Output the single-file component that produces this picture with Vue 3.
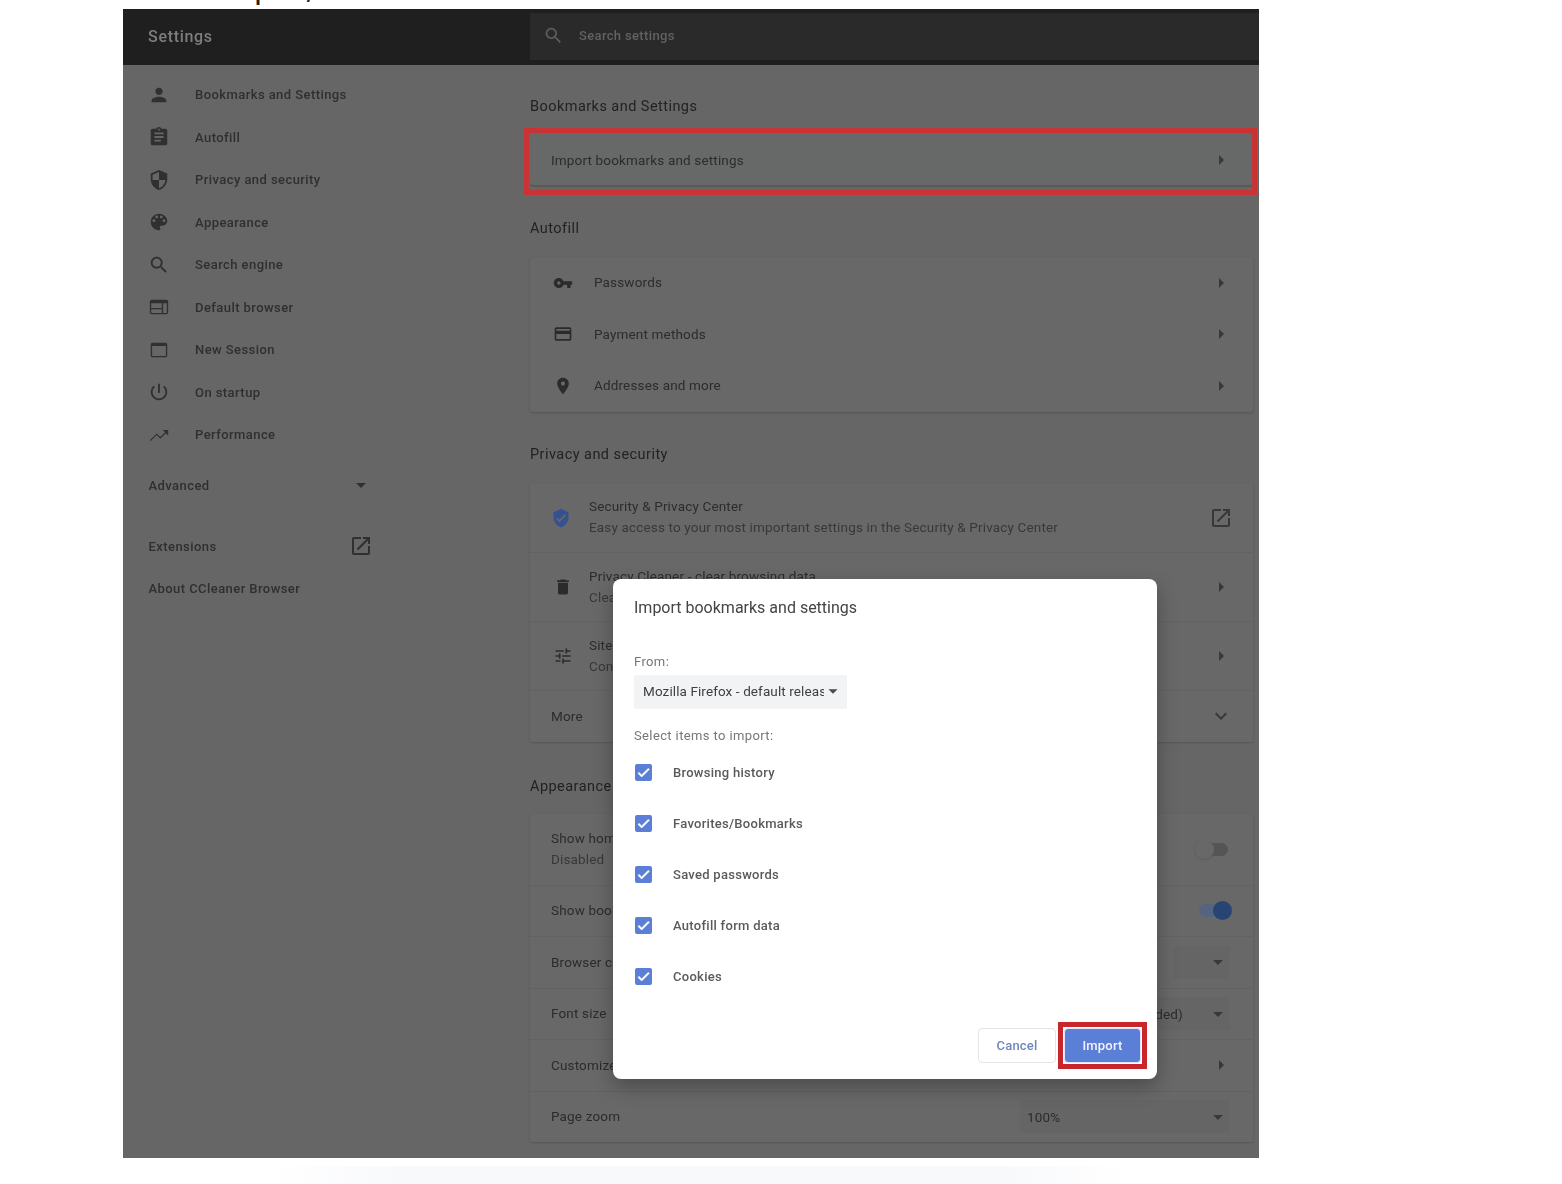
<script setup>
const icons = {
  person: "M12 12c2.21 0 4-1.79 4-4s-1.79-4-4-4-4 1.79-4 4 1.79 4 4 4zm0 2c-2.67 0-8 1.34-8 4v2h16v-2c0-2.66-5.33-4-8-4z",
  assignment: "M19 3h-4.18C14.4 1.84 13.3 1 12 1c-1.3 0-2.4.84-2.82 2H5c-1.1 0-2 .9-2 2v14c0 1.1.9 2 2 2h14c1.1 0 2-.9 2-2V5c0-1.1-.9-2-2-2zm-7 0c.55 0 1 .45 1 1s-.45 1-1 1-1-.45-1-1 .45-1 1-1zm2 14H7v-2h7v2zm3-4H7v-2h10v2zm0-4H7V7h10v2z",
  security: "M12 1L3 5v6c0 5.55 3.84 10.74 9 12 5.16-1.26 9-6.45 9-12V5l-9-4zm0 10.99h7c-.53 4.12-3.28 7.79-7 8.94V12H5V6.3l7-3.11v8.8z",
  palette: "M12 3c-4.97 0-9 4.03-9 9s4.03 9 9 9c.83 0 1.5-.67 1.5-1.5 0-.39-.15-.74-.39-1.01-.23-.26-.38-.61-.38-.99 0-.83.67-1.5 1.5-1.5H16c2.76 0 5-2.24 5-5 0-4.42-4.03-8-9-8zm-5.5 9c-.83 0-1.5-.67-1.5-1.5S5.67 9 6.5 9 8 9.67 8 10.5 7.33 12 6.5 12zm3-4C8.67 8 8 7.33 8 6.5S8.67 5 9.5 5s1.5.67 1.5 1.5S10.33 8 9.5 8zm5 0c-.83 0-1.5-.67-1.5-1.5S13.67 5 14.5 5s1.5.67 1.5 1.5S15.33 8 14.5 8zm3 4c-.83 0-1.5-.67-1.5-1.5S16.67 9 17.5 9s1.5.67 1.5 1.5-.67 1.5-1.5 1.5z",
  search: "M15.5 14h-.79l-.28-.27C15.41 12.59 16 11.11 16 9.5 16 5.91 13.09 3 9.5 3S3 5.91 3 9.5 5.91 16 9.5 16c1.61 0 3.09-.59 4.23-1.57l.27.28v.79l5 4.99L20.49 19l-4.99-5zm-6 0C7.01 14 5 11.99 5 9.5S7.01 5 9.5 5 14 7.01 14 9.5 11.99 14 9.5 14z",
  web: "M20 4H4a2 2 0 0 0-2 2v12a2 2 0 0 0 2 2h16a2 2 0 0 0 2-2V6a2 2 0 0 0-2-2zm-5 14.5H3.5v-4H15v4zm0-5.5H3.5V8H15v5zm5.5 5.5h-4V8h4v10.5z",
  asset: "M19 4H5c-1.11 0-2 .9-2 2v12c0 1.1.89 2 2 2h14c1.1 0 2-.9 2-2V6c0-1.1-.89-2-2-2zm.5 14.5h-15V7.5h15v11z",
  power: "M13 3h-2v10h2V3zm4.83 2.17l-1.42 1.42C17.99 7.86 19 9.81 19 12c0 3.87-3.13 7-7 7s-7-3.13-7-7c0-2.19 1.01-4.14 2.58-5.42L6.17 5.17C4.23 6.82 3 9.26 3 12c0 4.97 4.03 9 9 9s9-4.03 9-9c0-2.74-1.23-5.18-3.17-6.83z",
  trending: "M16 6.5l2.6 2.6-5.2 5.2-4-4L2 17.6l.9.9 6.5-6.5 4 4 6-6 2.6 2.5V6.5z",
  open: "M19 19H5V5h7V3H5c-1.11 0-2 .9-2 2v14c0 1.1.89 2 2 2h14c1.1 0 2-.9 2-2v-7h-2v7zM14 3v2h3.59l-9.83 9.83 1.41 1.41L19 6.41V10h2V3h-7z",
  key: "M12.65 10C11.83 7.67 9.61 6 7 6c-3.31 0-6 2.69-6 6s2.69 6 6 6c2.61 0 4.83-1.67 5.65-4H17v4h4v-4h2v-4H12.65zM7 14c-1.1 0-2-.9-2-2s.9-2 2-2 2 .9 2 2-.9 2-2 2z",
  card: "M20 4H4c-1.11 0-1.99.89-1.99 2L2 18c0 1.11.89 2 2 2h16c1.11 0 2-.89 2-2V6c0-1.11-.89-2-2-2zm0 14H4v-6h16v6zm0-10H4V6h16v2z",
  place: "M12 2C8.13 2 5 5.13 5 9c0 5.25 7 13 7 13s7-7.75 7-13c0-3.87-3.13-7-7-7zm0 9.5c-1.38 0-2.5-1.12-2.5-2.5s1.12-2.5 2.5-2.5 2.5 1.12 2.5 2.5-1.12 2.5-2.5 2.5z",
  trash: "M6 19c0 1.1.9 2 2 2h8c1.1 0 2-.9 2-2V7H6v12zM19 4h-3.5l-1-1h-5l-1 1H5v2h14V4z",
  tune: "M3 17v2h6v-2H3zM3 5v2h10V5H3zm10 16v-2h8v-2h-8v-2h-2v6h2zM7 9v2H3v2h4v2h2V9H7zm14 4v-2H11v2h10zm-6-4h2V7h4V5h-4V3h-2v6z",
  verified: "M12 1L3 5v6c0 5.55 3.84 10.74 9 12 5.16-1.26 9-6.45 9-12V5l-9-4zm-2 16l-4-4 1.41-1.41L10 14.17l6.59-6.59L18 9l-8 8z",
  expand: "M16.59 8.59L12 13.17 7.41 8.59 6 10l6 6 6-6z",
  dropdown: "M7 10l5 5 5-5z",
  right: "M10 17l5-5-5-5v10z",
  check: "M9 16.17L4.83 12l-1.41 1.41L9 19 21 7l-1.41-1.41z",
};

const navItems = [
  { label: "Bookmarks and Settings", icon: "person" },
  { label: "Autofill", icon: "assignment" },
  { label: "Privacy and security", icon: "security" },
  { label: "Appearance", icon: "palette" },
  { label: "Search engine", icon: "search" },
  { label: "Default browser", icon: "web" },
  { label: "New Session", icon: "asset" },
  { label: "On startup", icon: "power" },
  { label: "Performance", icon: "trending" },
];

const sections = [
  {
    title: "Bookmarks and Settings",
    marked: true,
    rows: [{ label: "Import bookmarks and settings", trail: "right" }],
  },
  {
    title: "Autofill",
    rows: [
      { label: "Passwords", icon: "key", trail: "right" },
      { label: "Payment methods", icon: "card", trail: "right" },
      { label: "Addresses and more", icon: "place", trail: "right" },
    ],
  },
  {
    title: "Privacy and security",
    lined: true,
    rows: [
      {
        label: "Security & Privacy Center",
        sub: "Easy access to your most important settings in the Security & Privacy Center",
        icon: "verified",
        blue: true,
        trail: "open",
      },
      {
        label: "Privacy Cleaner - clear browsing data",
        sub: "Clear history, cookies, cache and more",
        icon: "trash",
        trail: "right",
      },
      {
        label: "Site Settings",
        sub: "Control what information websites can use",
        icon: "tune",
        trail: "right",
      },
      { label: "More", trail: "expand" },
    ],
  },
  {
    title: "Appearance",
    lined: true,
    rows: [
      { label: "Show home button", sub: "Disabled", toggle: "off" },
      { label: "Show bookmarks bar", toggle: "on" },
      { label: "Browser color theme", select: "", short: true },
      { label: "Font size", select: "Medium (Recommended)" },
      { label: "Customize fonts", trail: "right" },
      { label: "Page zoom", select: "100%" },
    ],
  },
];

const importItems = ["Browsing history", "Favorites/Bookmarks", "Saved passwords", "Autofill form data", "Cookies"];
</script>

<template>
  <div class="page">
    <div class="cut-line"><div class="cut-text">Click Import,</div></div>

    <div class="window">
      <header class="topbar">
        <div class="brand">Settings</div>
        <div class="search">
          <svg class="search-icon" viewBox="0 0 24 24"><path :d="icons.search" /></svg>
          <span>Search settings</span>
        </div>
      </header>

      <div class="content">
        <aside class="sidebar">
          <div v-for="item in navItems" :key="item.label" class="nav-item">
            <svg class="nav-icon" viewBox="0 0 24 24"><path :d="icons[item.icon]" /></svg>
            <span>{{ item.label }}</span>
          </div>
          <div class="nav-plain advanced">
            <span>Advanced</span>
            <svg class="nav-icon" viewBox="0 0 24 24"><path :d="icons.dropdown" /></svg>
          </div>
          <div class="nav-plain extensions">
            <span>Extensions</span>
            <svg class="nav-icon" viewBox="0 0 24 24"><path :d="icons.open" /></svg>
          </div>
          <div class="nav-plain">
            <span>About CCleaner Browser</span>
          </div>
        </aside>

        <main class="main">
          <section v-for="section in sections" :key="section.title" class="section">
            <h2 class="section-title">{{ section.title }}</h2>
            <div class="card" :class="{ lined: section.lined, marked: section.marked }">
              <div v-if="section.marked" class="red-box"></div>
              <div
                v-for="row in section.rows"
                :key="row.label"
                class="row"
                :class="{ tall: row.sub, 'has-sub-icon': row.sub && row.icon }"
              >
                <svg v-if="row.icon" class="row-icon" :class="{ blue: row.blue }" viewBox="0 0 24 24">
                  <path :d="icons[row.icon]" />
                </svg>
                <div class="row-text">
                  <div>{{ row.label }}</div>
                  <div v-if="row.sub" class="row-sub">{{ row.sub }}</div>
                </div>
                <svg v-if="row.trail" class="row-trail" viewBox="0 0 24 24"><path :d="icons[row.trail]" /></svg>
                <div v-if="row.toggle" class="toggle" :class="row.toggle"><span class="knob"></span></div>
                <div v-if="row.select !== undefined" class="select" :class="{ short: row.short }">
                  <span>{{ row.select }}</span>
                  <svg class="row-trail" viewBox="0 0 24 24"><path :d="icons.dropdown" /></svg>
                </div>
              </div>
            </div>
          </section>
        </main>
      </div>

      <div class="dialog">
        <div class="dialog-title">Import bookmarks and settings</div>
        <div class="dialog-label from">From:</div>
        <div class="browser-select">
          <span class="browser-name">Mozilla Firefox - default release</span>
          <svg class="browser-arrow" viewBox="0 0 24 24"><path :d="icons.dropdown" /></svg>
        </div>
        <div class="dialog-label items">Select items to import:</div>
        <div class="checks">
          <div v-for="item in importItems" :key="item" class="check-row">
            <span class="checkbox">
              <svg viewBox="0 0 24 24"><path :d="icons.check" /></svg>
            </span>
            <span>{{ item }}</span>
          </div>
        </div>
        <div class="actions">
          <button class="btn cancel">Cancel</button>
          <button class="btn import">Import</button>
          <div class="red-box-import"></div>
        </div>
      </div>
    </div>

    <div class="bottom-glow"></div>
  </div>
</template>

<style>
html,
body {
  margin: 0;
  background: #fff;
}
</style>

<style scoped>
.page {
  width: 1562px;
  height: 1184px;
  overflow: hidden;
  background: #fff;
  font-family: Roboto, "Liberation Sans", sans-serif;
}

.cut-line {
  height: 9px;
  overflow: hidden;
  padding-left: 160px;
  font-family: "Open Sans", sans-serif;
  font-size: 25px;
  font-weight: 600;
  line-height: 9px;
  color: #222;
  white-space: nowrap;
}

.cut-text {
  margin-top: -15px;
}

.window {
  position: relative;
  width: 1136px;
  height: 1149px;
  margin-left: 123px;
  background: #666;
  overflow: hidden;
  filter: blur(0.45px);
}

.topbar {
  display: flex;
  align-items: center;
  height: 56px;
  background: #1f1f1f;
}

.brand {
  width: 407px;
  box-sizing: border-box;
  padding: 0 0 2px 25px;
  font-size: 16px;
  font-weight: 500;
  letter-spacing: 0.7px;
  color: #7e7e7e;
}

.search {
  flex: 1;
  display: flex;
  align-items: center;
  height: 47px;
  margin-bottom: 1px;
  padding: 0 0 2px 13px;
  box-sizing: border-box;
  background: #2a2a2a;
  font-size: 13px;
  font-weight: 500;
  letter-spacing: 0.35px;
  color: #626262;
}

.search-icon {
  width: 21px;
  height: 21px;
  margin-right: 15px;
  fill: #5c5c5c;
}

.content {
  display: flex;
}

.sidebar {
  width: 407px;
  box-sizing: border-box;
  padding: 8.5px 0 0 25.5px;
  font-size: 13px;
  font-weight: 500;
  letter-spacing: 0.43px;
  color: #2f2f2f;
}

.nav-item {
  display: flex;
  align-items: center;
  height: 42.5px;
}

.nav-icon {
  flex: none;
  width: 24px;
  height: 24px;
  fill: #303030;
}

.nav-item .nav-icon {
  width: 22px;
  height: 22px;
  margin: 0 25.5px 0 -1px;
}

.nav-plain {
  display: flex;
  align-items: center;
  justify-content: space-between;
  width: 224.5px;
  height: 42.5px;
}

.advanced {
  margin-top: 8px;
}

.extensions {
  margin-top: 18.5px;
}

.main {
  flex: 1;
  padding-top: 28px;
  color: #2c2c2c;
}

.section {
  width: 723px;
  margin-top: 31px;
}

.section:first-child {
  margin-top: 0;
}

.section:nth-child(2) {
  margin-top: 28px;
}

.section:nth-child(3) {
  margin-top: 29.5px;
}

.section-title {
  margin: 0 0 14px;
  font-size: 14.5px;
  font-weight: 400;
  line-height: 28px;
  letter-spacing: 0.45px;
  color: #222;
}

.section:first-child .section-title {
  margin-bottom: 12px;
}

.section:nth-child(4) .section-title {
  margin-bottom: 13px;
}

.card {
  position: relative;
  background: #686868;
  border-radius: 3px;
  box-shadow: 0 1px 2px #555;
  font-size: 13.5px;
  letter-spacing: 0.16px;
}

.card.marked {
  background: #666967;
  box-shadow: inset 0 -2px 0 #585a58;
}

.red-box {
  position: absolute;
  inset: -5px -4px -8px -6px;
  border: 5px solid #c93333;
}

.row {
  display: flex;
  align-items: center;
  height: 51.5px;
  box-sizing: border-box;
  padding: 0 20px 0 21px;
}

.marked .row {
  height: 54px;
}

.lined .row + .row {
  border-top: 1px solid #626262;
}

.row.tall {
  height: 69px;
}

.section:nth-child(4) .row:first-child {
  height: 71px;
}

.row-icon {
  flex: none;
  width: 20px;
  height: 20px;
  margin: 0 21.5px 0 1.5px;
  fill: #2b2b2b;
}

.has-sub-icon .row-icon {
  margin-right: 16.5px;
}

.row-icon.blue {
  margin: 0 18px 0 0;
  fill: #36518f;
}

.row-text {
  flex: 1;
  line-height: 21px;
  white-space: nowrap;
}

.has-sub-icon:first-child .row-text {
  margin-top: -2px;
}

.row-sub {
  color: #383838;
}

.row-trail {
  flex: none;
  width: 24px;
  height: 24px;
  fill: #383838;
}

.toggle {
  position: relative;
  width: 32px;
  height: 13px;
  margin-right: 2px;
  border-radius: 7px;
  background: #555;
}

.toggle.off {
  margin-right: 5px;
}

.toggle .knob {
  position: absolute;
  top: -3px;
  width: 19px;
  height: 19px;
  border-radius: 50%;
}

.toggle.off .knob {
  left: -1px;
  background: #686868;
  box-shadow: 0 1px 2px #5a5a5a;
}

.toggle.on {
  background: #56657f;
}

.toggle.on .knob {
  right: -1px;
  background: #284473;
}

.select {
  display: flex;
  align-items: center;
  flex: none;
  width: 210px;
  height: 33px;
  margin-right: 3px;
  padding-left: 7px;
  box-sizing: border-box;
  border-radius: 3px;
  background: #656565;
  font-size: 13.5px;
}

.select.short {
  width: 57px;
}

.select span {
  flex: 1;
  white-space: nowrap;
}

.dialog {
  position: absolute;
  left: 490px;
  top: 570px;
  width: 544px;
  height: 500px;
  box-sizing: border-box;
  padding: 0 16px 0 21px;
  border-radius: 8px;
  background: #fff;
  box-shadow: 0 8px 20px rgba(0, 0, 0, 0.28);
  display: flex;
  flex-direction: column;
  color: #444;
}

.dialog-title {
  margin-top: 17px;
  font-size: 16px;
  line-height: 24px;
  color: #444;
}

.dialog-label {
  font-size: 13px;
  line-height: 20px;
  letter-spacing: 0.38px;
  color: #777;
}

.from {
  margin-top: 32px;
}

.browser-select {
  display: flex;
  align-items: center;
  width: 213px;
  height: 34px;
  margin-top: 3px;
  box-sizing: border-box;
  padding: 0 0 2px 9px;
  border-radius: 2px;
  background: #f1f3f4;
  font-size: 13.5px;
  letter-spacing: 0.1px;
  color: #3f3f3f;
}

.browser-name {
  width: 181px;
  overflow: hidden;
  white-space: nowrap;
}

.browser-arrow {
  flex: none;
  width: 22px;
  height: 22px;
  margin-left: -2px;
  fill: #4a4a4a;
}

.items {
  margin-top: 17px;
}

.checks {
  margin-top: 1px;
}

.check-row {
  display: flex;
  align-items: center;
  height: 51px;
  font-size: 13px;
  font-weight: 500;
  letter-spacing: 0.28px;
  color: #5a5a5a;
}

.checkbox {
  display: flex;
  align-items: center;
  justify-content: center;
  width: 17px;
  height: 17px;
  margin: 0 21px 0 1px;
  border-radius: 2px;
  background: #5b7fd6;
}

.checkbox svg {
  width: 15px;
  height: 15px;
  fill: #fff;
  stroke: #fff;
  stroke-width: 1.5;
}

.actions {
  position: relative;
  display: flex;
  justify-content: flex-end;
  gap: 8px;
  margin-top: auto;
  margin-bottom: 16px;
}

.btn {
  height: 35px;
  border-radius: 4px;
  font-family: inherit;
  font-size: 13px;
  font-weight: 500;
  letter-spacing: 0.2px;
}

.cancel {
  width: 78px;
  border: 1px solid #e3e5e8;
  background: #fff;
  color: #6f86c0;
}

.import {
  width: 77px;
  border: 1px solid #dfe6f6;
  background: #5b7fd6;
  color: #f2f5fc;
}

.red-box-import {
  position: absolute;
  right: -6px;
  top: -6px;
  width: 89px;
  height: 47px;
  box-sizing: border-box;
  border: 5px solid #c8262a;
}

.bottom-glow {
  height: 18px;
  margin: 8px 430px 0 270px;
  background: linear-gradient(90deg, #fff, #f8f9fb 15%, #f8f9fb 85%, #fff);
}
</style>
